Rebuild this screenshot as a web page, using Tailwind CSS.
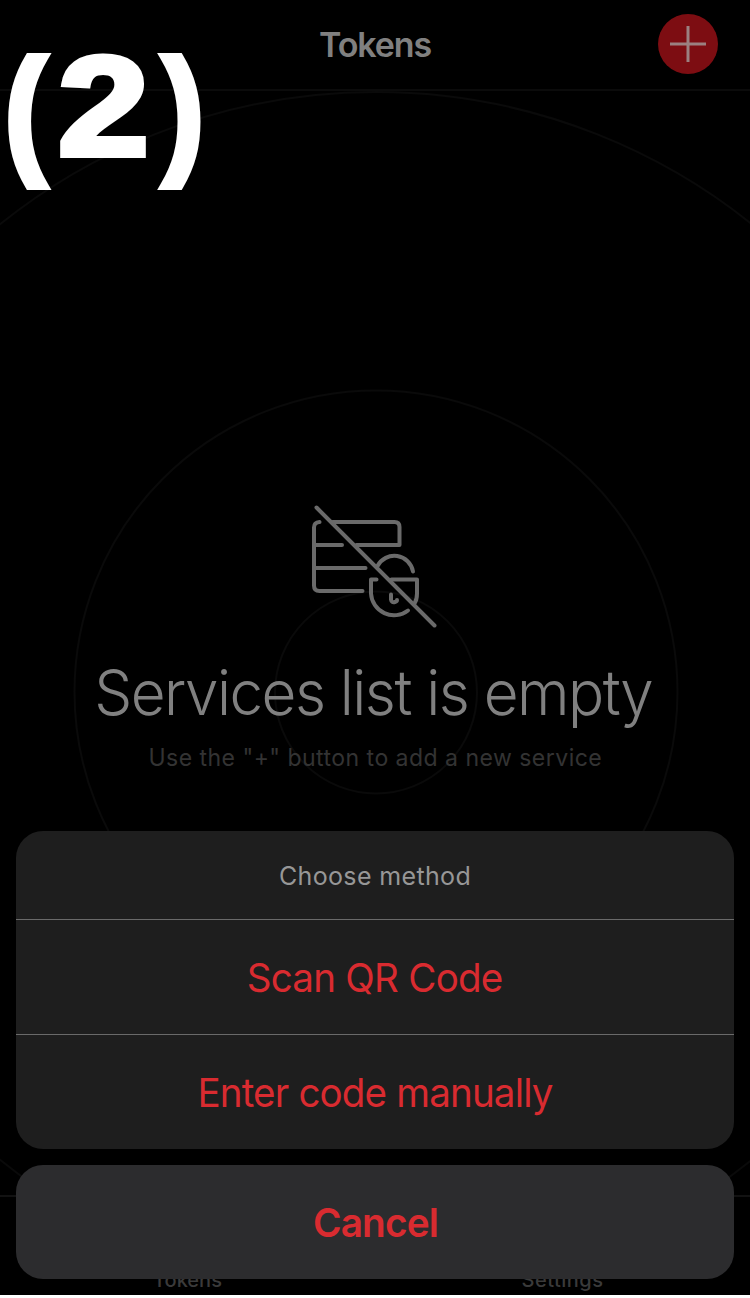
<!DOCTYPE html>
<html lang="en">
<head>
<meta charset="utf-8">
<title>Tokens</title>
<script src="https://cdn.jsdelivr.net/npm/@tailwindcss/browser@4"></script>
</head>
<body class="bg-white">
<div class="relative flex h-[1295px] w-[750px] flex-col overflow-hidden bg-black font-['Inter',sans-serif]">
  <svg class="absolute inset-0" width="750" height="1295" fill="none" stroke="#0a0a0a" stroke-width="2">
    <circle cx="376" cy="692.5" r="101"/><circle cx="376" cy="692" r="301.5"/><circle cx="376" cy="692" r="600"/>
  </svg>
  <header class="relative grid h-[91px] shrink-0 grid-cols-[1fr_auto_1fr] items-center border-b-2 border-[#0b0b0b] px-8 pb-px">
    <span></span>
    <h1 class="pt-px text-[34px] leading-[44px] font-semibold tracking-[-1.1px] text-[#808080]">Tokens</h1>
    <button class="flex size-[60px] items-center justify-center justify-self-end rounded-full bg-[#7d0d12]">
      <svg width="36" height="36" stroke="#9b8080" stroke-width="3"><path d="M18 0V36M0 18H36"/></svg>
    </button>
  </header>
  <main class="relative flex flex-1 flex-col items-center pt-[414px]">
    <svg width="126" height="124" viewBox="312.500 505.500 126 124" fill="none" stroke="#6a6a6a" stroke-width="4" stroke-linecap="round" stroke-linejoin="round">
      <path d="M317 508L435 626M320 522.5Q314.500 523 314.500 528V586Q314.500 591.500 320 591.500H363M314.500 545.500H342.500M314.500 568.500H366M333 522.500H395Q400 522.500 400 527.500V545.500H357"/>
      <path d="M378 566.500A19 19 0 0 1 413.500 572M377 580H371.500V594A23 23 0 0 0 408.500 611M392 580H417.500V594Q417.500 600 415 604M391.500 595V600Q392 603.500 395.500 602.500Q397.500 602 397.500 600.500"/>
    </svg>
    <h2 class="mt-[23px] mr-[3px] scale-x-[0.955] text-[63px] leading-[80px] font-[350] tracking-[-1.6px] whitespace-nowrap text-[#808080]">Services list is empty</h2>
    <p class="mt-[10px] text-[24px] leading-[32px] whitespace-nowrap text-[#333]"><span class="inline-block scale-x-[0.96] tracking-[0.48px]">Use the "+" button to add a new service</span></p>
  </main>
  <nav class="relative grid h-[100px] shrink-0 grid-cols-2 items-end border-t-2 border-[#121212] bg-black pb-[2px] text-center text-[20px] leading-[26px] font-medium text-[#3a3a3a]">
    <span>Tokens</span><span class="tracking-[0.5px]">Settings</span>
  </nav>
  <div class="absolute inset-x-4 top-[831px] flex flex-col gap-4 text-center text-[#d92b30]">
    <div class="flex flex-col overflow-hidden rounded-[27px] bg-[#1e1e1e]">
      <div class="flex h-[88px] items-center justify-center pt-[4px] text-[25px] tracking-[0.35px] text-[#979797]"><span>Choose method</span></div>
      <button class="h-[115px] border-t border-[#6a6a6a] pt-px text-[40px]"><span class="inline-block scale-x-[0.965] tracking-[-0.8px]">Scan QR Code</span></button>
      <button class="h-[115px] border-t border-[#6a6a6a] pt-px text-[40px]"><span class="inline-block scale-x-[0.965] tracking-[-0.9px]">Enter code manually</span></button>
    </div>
    <button class="h-[114px] rounded-[27px] bg-[#2c2c2e] pt-px text-[40px] font-semibold"><span class="inline-block scale-x-[0.97] tracking-[-0.9px]">Cancel</span></button>
  </div>
  <svg class="absolute inset-0 font-['Liberation_Sans',sans-serif] font-bold" width="220" height="200" fill="#fff" stroke="#fff">
    <text transform="translate(5.8 156.600) scale(.855 .985)" font-size="138.4" stroke-width="8">(</text>
    <text transform="translate(58 155) scale(1.146 .99)" font-size="142.6" stroke-width="6">2</text>
    <text transform="translate(163.5 156.600) scale(.855 .985)" font-size="138.4" stroke-width="8">)</text>
  </svg>
</div>
</body>
</html>
